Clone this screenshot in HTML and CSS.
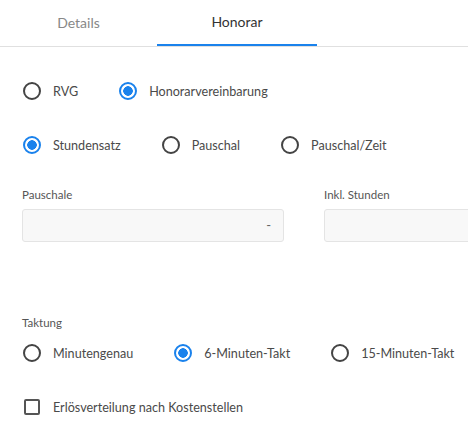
FILE: index.html
```html
<!DOCTYPE html>
<html lang="de">
<head>
    <meta charset="UTF-8">
    <title>Honorar</title>
    <link rel="stylesheet" href="styles.css">
</head>
<body>
    <div class="tabs">
        <div class="tab">Details</div>
        <div class="tab active">Honorar</div>
    </div>

    <main class="content">
        <div class="radio-row row-type">
            <label class="option"><span class="radio"></span>RVG</label>
            <label class="option"><span class="radio checked"></span>Honorarvereinbarung</label>
        </div>

        <div class="radio-row row-mode">
            <label class="option"><span class="radio checked"></span>Stundensatz</label>
            <label class="option"><span class="radio"></span>Pauschal</label>
            <label class="option"><span class="radio"></span>Pauschal/Zeit</label>
        </div>

        <div class="fields">
            <div class="field">
                <div class="field-label">Pauschale</div>
                <div class="input">-</div>
            </div>
            <div class="field">
                <div class="field-label">Inkl. Stunden</div>
                <div class="input"></div>
            </div>
        </div>

        <div class="group-label">Taktung</div>
        <div class="radio-row row-takt">
            <label class="option"><span class="radio"></span>Minutengenau</label>
            <label class="option"><span class="radio checked"></span>6-Minuten-Takt</label>
            <label class="option"><span class="radio"></span>15-Minuten-Takt</label>
        </div>

        <div class="radio-row row-check">
            <label class="option"><span class="checkbox"></span>Erlösverteilung nach Kostenstellen</label>
        </div>
    </main>
</body>
</html>
```

FILE: styles.css
```css
body {
    font-family: 'Lato', 'Open Sans', sans-serif;
    margin: 0;
    padding: 0;
    background-color: #ffffff;
    color: #444444;
    overflow: hidden;
    width: 468px;
    height: 432px;
}

.tabs {
    display: flex;
    height: 46px;
    border-bottom: 1px solid #e0e0e0;
}

.tab {
    width: 160px;
    box-sizing: border-box;
    text-align: center;
    line-height: 46px;
    font-size: 14px;
    color: #888888;
}

.tab:first-child {
    width: 157px;
}

.tab.active {
    color: #333333;
    border-bottom: 2px solid #1a82ec;
    line-height: 44px;
}

.content {
    padding: 0 0 0 22px;
}

.radio-row {
    display: flex;
    align-items: center;
    gap: 40px;
    height: 20px;
}

.row-type {
    margin-top: 34px;
}

.row-mode {
    margin-top: 34px;
}

.row-takt {
    margin-top: 13px;
}

.row-check {
    margin-top: 34px;
}

.option {
    display: flex;
    align-items: center;
    gap: 11px;
    font-size: 12.6px;
    color: #4a4a4a;
    white-space: nowrap;
}

.radio,
.checkbox {
    width: 20px;
    height: 20px;
    display: flex;
    align-items: center;
    justify-content: center;
    flex-shrink: 0;
}

.radio::before {
    content: "";
    width: 18px;
    height: 18px;
    box-sizing: border-box;
    border: 2px solid #444444;
    border-radius: 50%;
}

.radio.checked::before {
    border-color: #1a82ec;
    background: radial-gradient(circle, #1a82ec 0, #1a82ec 4.5px, #ffffff 5px);
}

.checkbox::before {
    content: "";
    width: 16px;
    height: 16px;
    box-sizing: border-box;
    border: 2px solid #555555;
    border-radius: 2px;
}

.fields {
    display: flex;
    gap: 40px;
    margin-top: 33px;
}

.field {
    width: 262px;
    flex-shrink: 0;
}

.field-label {
    font-size: 11.5px;
    color: #555555;
    height: 14px;
    line-height: 14px;
}

.input {
    margin-top: 7px;
    height: 33px;
    box-sizing: border-box;
    border: 1px solid #e4e4e4;
    border-radius: 3px;
    background-color: #f8f8f8;
    text-align: right;
    padding-right: 12px;
    line-height: 31px;
    font-size: 13px;
    color: #666666;
}

.group-label {
    margin-top: 74px;
    font-size: 11.5px;
    color: #555555;
    height: 14px;
    line-height: 14px;
}
```
